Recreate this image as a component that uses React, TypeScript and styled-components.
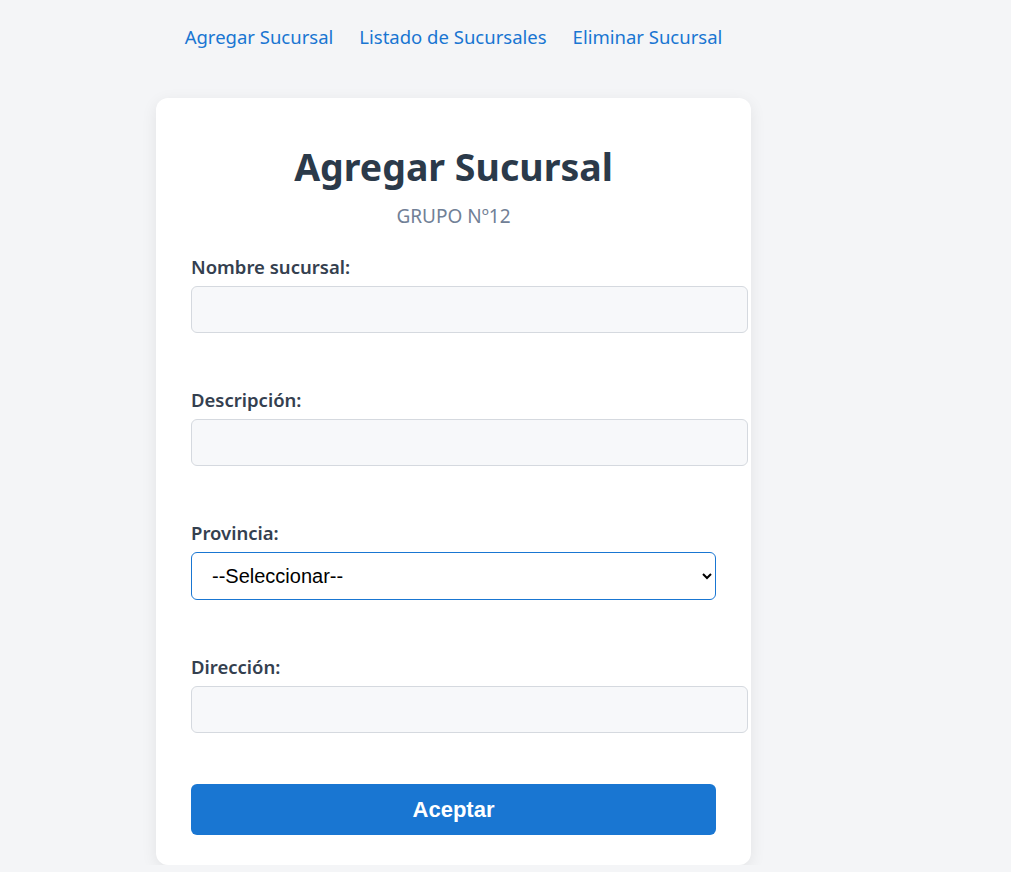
import React from 'react'
import styled, { createGlobalStyle } from 'styled-components'

const GlobalStyle = createGlobalStyle`
  body {
    margin: 0;
    background: #f4f5f7;
    font-family: "Noto Sans", "Open Sans", sans-serif;
  }
`

const Page = styled.div`
  width: 907px;
  display: flex;
  flex-direction: column;
  align-items: center;
  padding-top: 24px;
`

const Nav = styled.nav`
  display: flex;
  gap: 26px;
  margin-bottom: 48px;
`

const NavLink = styled.a`
  color: #1976d2;
  font-size: 18.5px;
  text-decoration: none;
  line-height: 26px;
  cursor: pointer;
`

const Card = styled.div`
  width: 525px;
  background: #ffffff;
  border-radius: 12px;
  padding: 43px 35px 30px;
  box-shadow: 0 4px 16px rgba(0, 0, 0, 0.08);
`

const Title = styled.h1`
  margin: 0;
  text-align: center;
  font-size: 37.5px;
  line-height: 52px;
  font-weight: 700;
  color: #2b3a4a;
`

const Subtitle = styled.p`
  margin: 11px 0 27px;
  text-align: center;
  font-size: 19px;
  line-height: 24px;
  color: #718096;
`

const Field = styled.div`
  margin-bottom: 55px;
  &:last-of-type {
    margin-bottom: 51px;
  }
`

const Label = styled.label`
  display: block;
  font-size: 18.5px;
  font-weight: 600;
  line-height: 24px;
  color: #34404f;
  margin-bottom: 7px;
`

const Input = styled.input`
  display: block;
  width: 100%;
  height: 17px;
  padding: 14px 15px;
  border: 1px solid #d5d9df;
  border-radius: 6px;
  background: #f7f8fa;
  font-size: 16px;
  font-family: inherit;
  outline: none;
`

const Select = styled.select`
  display: block;
  width: 100%;
  height: 48px;
  padding: 0 12px 0 16px;
  border: 1px solid #1976d2;
  border-radius: 6px;
  background: #ffffff;
  font-family: "Liberation Sans", Arial, sans-serif;
  font-size: 20px;
  color: #000;
  outline: none;
`

const Button = styled.button`
  display: block;
  width: 100%;
  height: 51px;
  border: none;
  border-radius: 6px;
  background: #1976d2;
  color: #ffffff;
  font-family: "Liberation Sans", Arial, sans-serif;
  font-size: 22px;
  font-weight: 700;
  cursor: pointer;
`

const links = ['Agregar Sucursal', 'Listado de Sucursales', 'Eliminar Sucursal']

export default function App() {
  return (
    <>
      <GlobalStyle />
      <Page>
        <Nav>
          {links.map((l) => (
            <NavLink key={l}>{l}</NavLink>
          ))}
        </Nav>
        <Card>
          <Title>Agregar Sucursal</Title>
          <Subtitle>GRUPO Nº12</Subtitle>
          <Field>
            <Label>Nombre sucursal:</Label>
            <Input type="text" />
          </Field>
          <Field>
            <Label>Descripción:</Label>
            <Input type="text" />
          </Field>
          <Field>
            <Label>Provincia:</Label>
            <Select defaultValue="">
              <option value="">--Seleccionar--</option>
            </Select>
          </Field>
          <Field>
            <Label>Dirección:</Label>
            <Input type="text" />
          </Field>
          <Button type="button">Aceptar</Button>
        </Card>
      </Page>
    </>
  )
}
